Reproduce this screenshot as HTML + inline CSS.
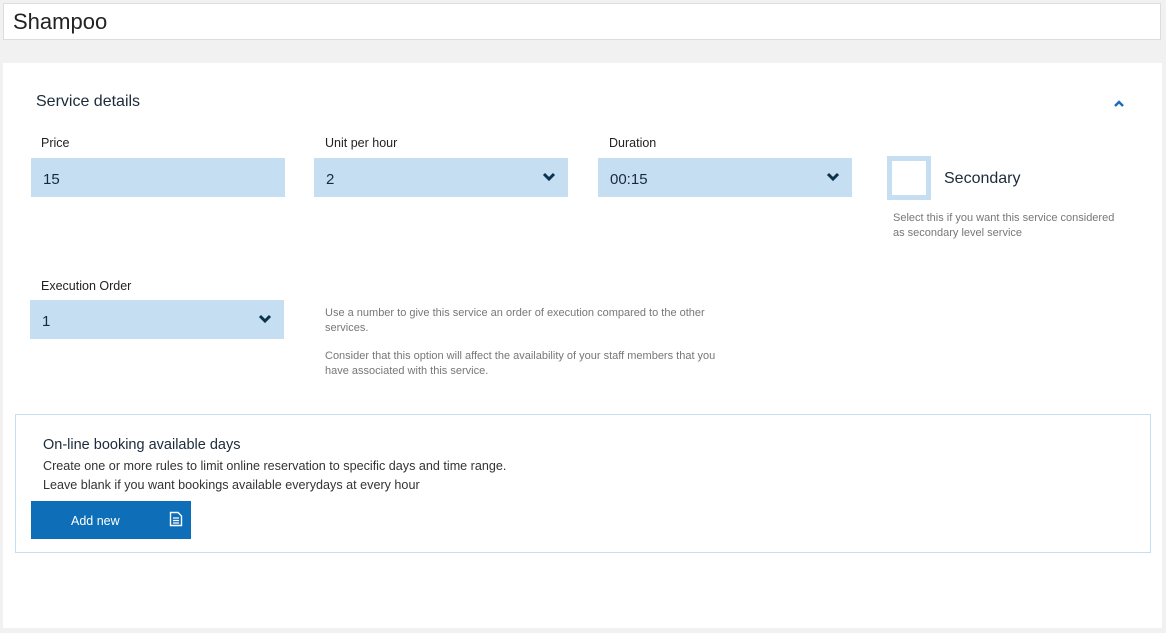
<!DOCTYPE html>
<html><head><style>
body{margin:0;background:#f1f1f1;width:1166px;height:633px;position:relative;font-family:"Liberation Sans",sans-serif;overflow:hidden}
.a{position:absolute}
.title{left:3px;top:3px;background:#fff;border:1px solid #ddd;font-size:22px;color:#222;line-height:35px;padding-left:9px;box-sizing:border-box;width:1158px;height:37px}
.panel{left:3px;top:63px;width:1159px;height:565px;background:#fff}
.lbl{font-size:12.5px;color:#222}
.inp{background:#c5def2;height:39px;width:254px;font-size:15px;color:#1a2a3a;line-height:43px;padding-left:12px;box-sizing:border-box}
.chev{position:absolute;right:12px;top:14px}
.small{font-size:11px;color:#777;line-height:14.5px}
</style></head><body>
<div class="a title">Shampoo</div>
<div class="a panel"></div>
<div class="a" style="left:36px;top:93px;font-size:16px;color:#1c2b3a">Service details</div>
<svg class="a" style="left:1113px;top:99px" width="12" height="9" viewBox="0 0 12 9"><path d="M2 7L6 3L10 7" stroke="#1a6fb8" stroke-width="2.5" fill="none"/></svg>
<div class="a lbl" style="left:41px;top:136px">Price</div>
<div class="a lbl" style="left:325px;top:136px">Unit per hour</div>
<div class="a lbl" style="left:609px;top:136px">Duration</div>
<div class="a inp" style="left:31px;top:158px">15</div>
<div class="a inp" style="left:314px;top:158px">2<svg class="chev" width="14" height="10" viewBox="0 0 14 10"><path d="M2 2L7 7L12 2" stroke="#0b3350" stroke-width="3" fill="none"/></svg></div>
<div class="a inp" style="left:598px;top:158px">00:15<svg class="chev" width="14" height="10" viewBox="0 0 14 10"><path d="M2 2L7 7L12 2" stroke="#0b3350" stroke-width="3" fill="none"/></svg></div>
<div class="a" style="left:887px;top:156px;width:44px;height:44px;border:5px solid #c5def2;box-sizing:border-box;background:#fff"></div>
<div class="a" style="left:944px;top:170px;font-size:16px;color:#1c2b3a">Secondary</div>
<div class="a small" style="left:893px;top:211px">Select this if you want this service considered<br>as secondary level service</div>
<div class="a lbl" style="left:41px;top:279px">Execution Order</div>
<div class="a inp" style="left:30px;top:300px">1<svg class="chev" width="14" height="10" viewBox="0 0 14 10"><path d="M2 2L7 7L12 2" stroke="#0b3350" stroke-width="3" fill="none"/></svg></div>
<div class="a small" style="left:325px;top:306px">Use a number to give this service an order of execution compared to the other<br>services.</div>
<div class="a small" style="left:325px;top:349px">Consider that this option will affect the availability of your staff members that you<br>have associated with this service.</div>
<div class="a" style="left:15px;top:414px;width:1136px;height:139px;border:1px solid #c5def2;box-sizing:border-box"></div>
<div class="a" style="left:43px;top:437px;font-size:14.5px;color:#1c2b3a">On-line booking available days</div>
<div class="a" style="left:43px;top:457px;font-size:12.6px;color:#333;line-height:19px">Create one or more rules to limit online reservation to specific days and time range.<br>Leave blank if you want bookings available everydays at every hour</div>
<div class="a" style="left:31px;top:501px;width:160px;height:38px;background:#0e6eb8;color:#fff;font-size:12.5px;line-height:40px"><span style="position:absolute;left:40px">Add new</span>
<svg class="a" style="left:138px;top:10px" width="14" height="16" viewBox="0 0 14 16"><path d="M1.5 1.5H9L12.5 5V14.5H1.5Z" stroke="#fff" stroke-width="1.4" fill="none"/><path d="M4 7H10M4 9.5H10M4 12H10" stroke="#fff" stroke-width="1.2"/></svg></div>
</body></html>
